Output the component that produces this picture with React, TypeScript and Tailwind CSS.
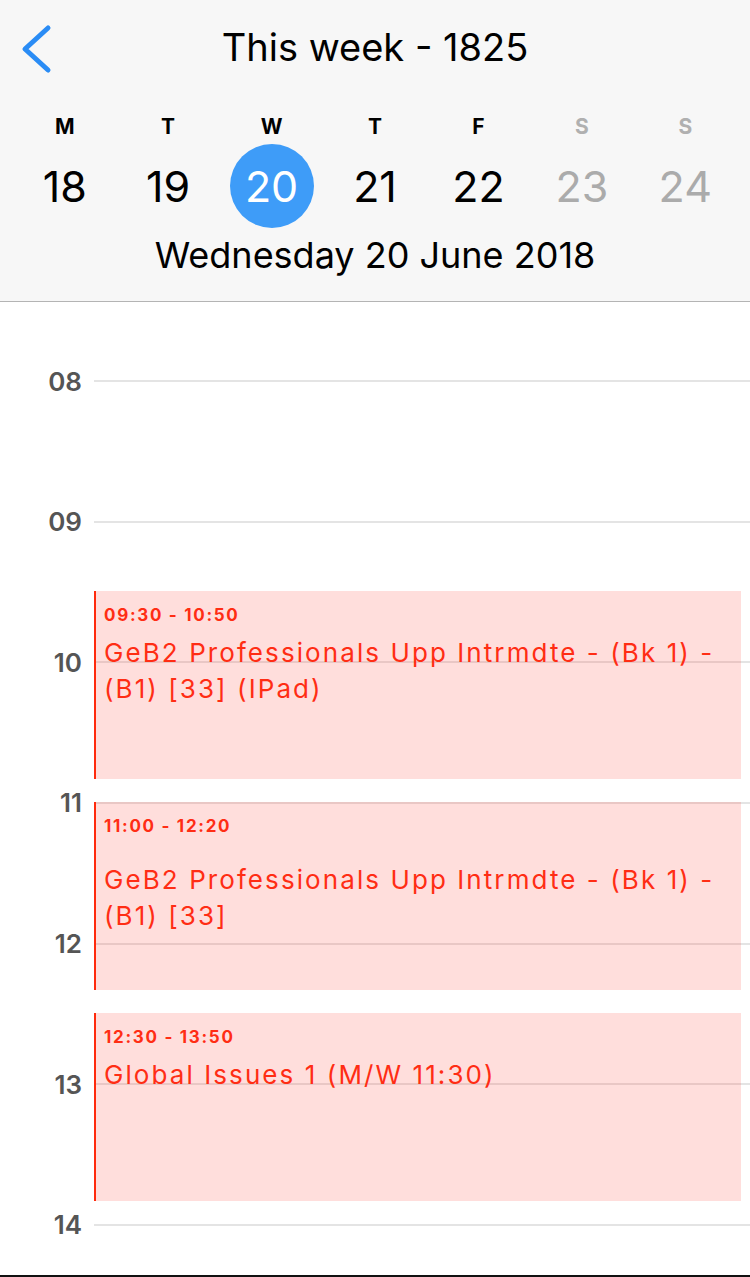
import React from "react";

const days = [
  { letter: "M", num: 18 },
  { letter: "T", num: 19 },
  { letter: "W", num: 20, selected: true },
  { letter: "T", num: 21 },
  { letter: "F", num: 22 },
  { letter: "S", num: 23, weekend: true },
  { letter: "S", num: 24, weekend: true },
];

const hours = ["08", "09", "10", "11", "12", "13", "14"];

const HOUR_PX = 140.67;
const FIRST_HOUR = 8;
const TOP_PAD = 79;

const events = [
  {
    start: 9.5,
    end: 10 + 50 / 60,
    time: "09:30 - 10:50",
    title: "GeB2 Professionals Upp Intrmdte - (Bk 1) - (B1) [33] (IPad)",
    gap: 9,
  },
  {
    start: 11,
    end: 12 + 20 / 60,
    time: "11:00 - 12:20",
    title: "GeB2 Professionals Upp Intrmdte - (Bk 1) - (B1) [33]",
    gap: 25,
  },
  {
    start: 12.5,
    end: 13 + 50 / 60,
    time: "12:30 - 13:50",
    title: "Global Issues 1 (M/W 11:30)",
    gap: 9,
  },
];

function BackChevron() {
  return (
    <svg width="34" height="50" viewBox="0 0 34 50" fill="none">
      <path
        d="M28 4 L5 25 L28 46"
        stroke="#2a8cf5"
        strokeWidth="5"
        strokeLinecap="round"
        strokeLinejoin="round"
      />
    </svg>
  );
}

export default function App() {
  return (
    <div className="flex h-[1277px] w-[750px] flex-col overflow-hidden bg-white font-['Inter',sans-serif]">
      {/* Header */}
      <div className="h-[302px] shrink-0 border-b border-[#b4b4b4] bg-[#f7f7f7]">
        <div className="grid h-[95px] grid-cols-[1fr_auto_1fr] items-center">
          <div className="pl-[20px] pt-[2px]">
            <BackChevron />
          </div>
          <div className="text-[38px] text-black">This week - 1825</div>
          <div />
        </div>

        <div className="mt-[16px] grid grid-cols-7 px-[13px]">
          {days.map((d, i) => (
            <div
              key={`l-${i}`}
              className={`h-[32px] text-center text-[21px] font-bold leading-[32px] ${
                d.weekend ? "text-[#b0b0b0]" : "text-black"
              }`}
            >
              {d.letter}
            </div>
          ))}
        </div>

        <div className="mt-[1px] grid grid-cols-7 px-[13px]">
          {days.map((d, i) => (
            <div key={`n-${i}`} className="flex h-[84px] items-center justify-center">
              {d.selected ? (
                <div className="flex h-[84px] w-[84px] items-center justify-center rounded-full bg-[#3e9cf8] text-[43px] text-white">
                  {d.num}
                </div>
              ) : (
                <span
                  className={`text-[43px] ${
                    d.weekend ? "text-[#ababab]" : "text-black"
                  }`}
                >
                  {d.num}
                </span>
              )}
            </div>
          ))}
        </div>

        <div className="mt-[5px] h-[44px] text-center text-[36px] leading-[44px] text-black">
          Wednesday 20 June 2018
        </div>
      </div>

      {/* Timeline */}
      <div className="relative flex-1 overflow-hidden pt-[79px]">
        {hours.map((h) => (
          <div key={h} className="h-[140.67px]">
            <div className="flex h-0 items-center">
              <span className="w-[94px] pr-[12px] text-right text-[26px] font-semibold text-[#555555]">
                {h}
              </span>
              <div className="h-[2px] flex-1 bg-[#e4e4e4]" />
            </div>
          </div>
        ))}

        {events.map((ev) => (
          <div
            key={ev.time}
            className="absolute left-[94px] right-[9px] border-l-[2px] border-[#ff2a0c] bg-[#ff3b30]/[0.17] pl-[8px] pr-[10px] pt-[13px]"
            style={{
              top: TOP_PAD + (ev.start - FIRST_HOUR) * HOUR_PX - 1,
              height: (ev.end - ev.start) * HOUR_PX,
            }}
          >
            <div className="h-[22px] text-[17px] font-bold leading-[22px] tracking-[0.1em] text-[#ff2d14]">
              {ev.time}
            </div>
            <div
              className="text-[26px] leading-[36px] tracking-[0.08em] text-[#ff2d14]"
              style={{ marginTop: ev.gap }}
            >
              {ev.title}
            </div>
          </div>
        ))}
      </div>

      <div className="h-[2px] shrink-0 bg-[#111111]" />
    </div>
  );
}
